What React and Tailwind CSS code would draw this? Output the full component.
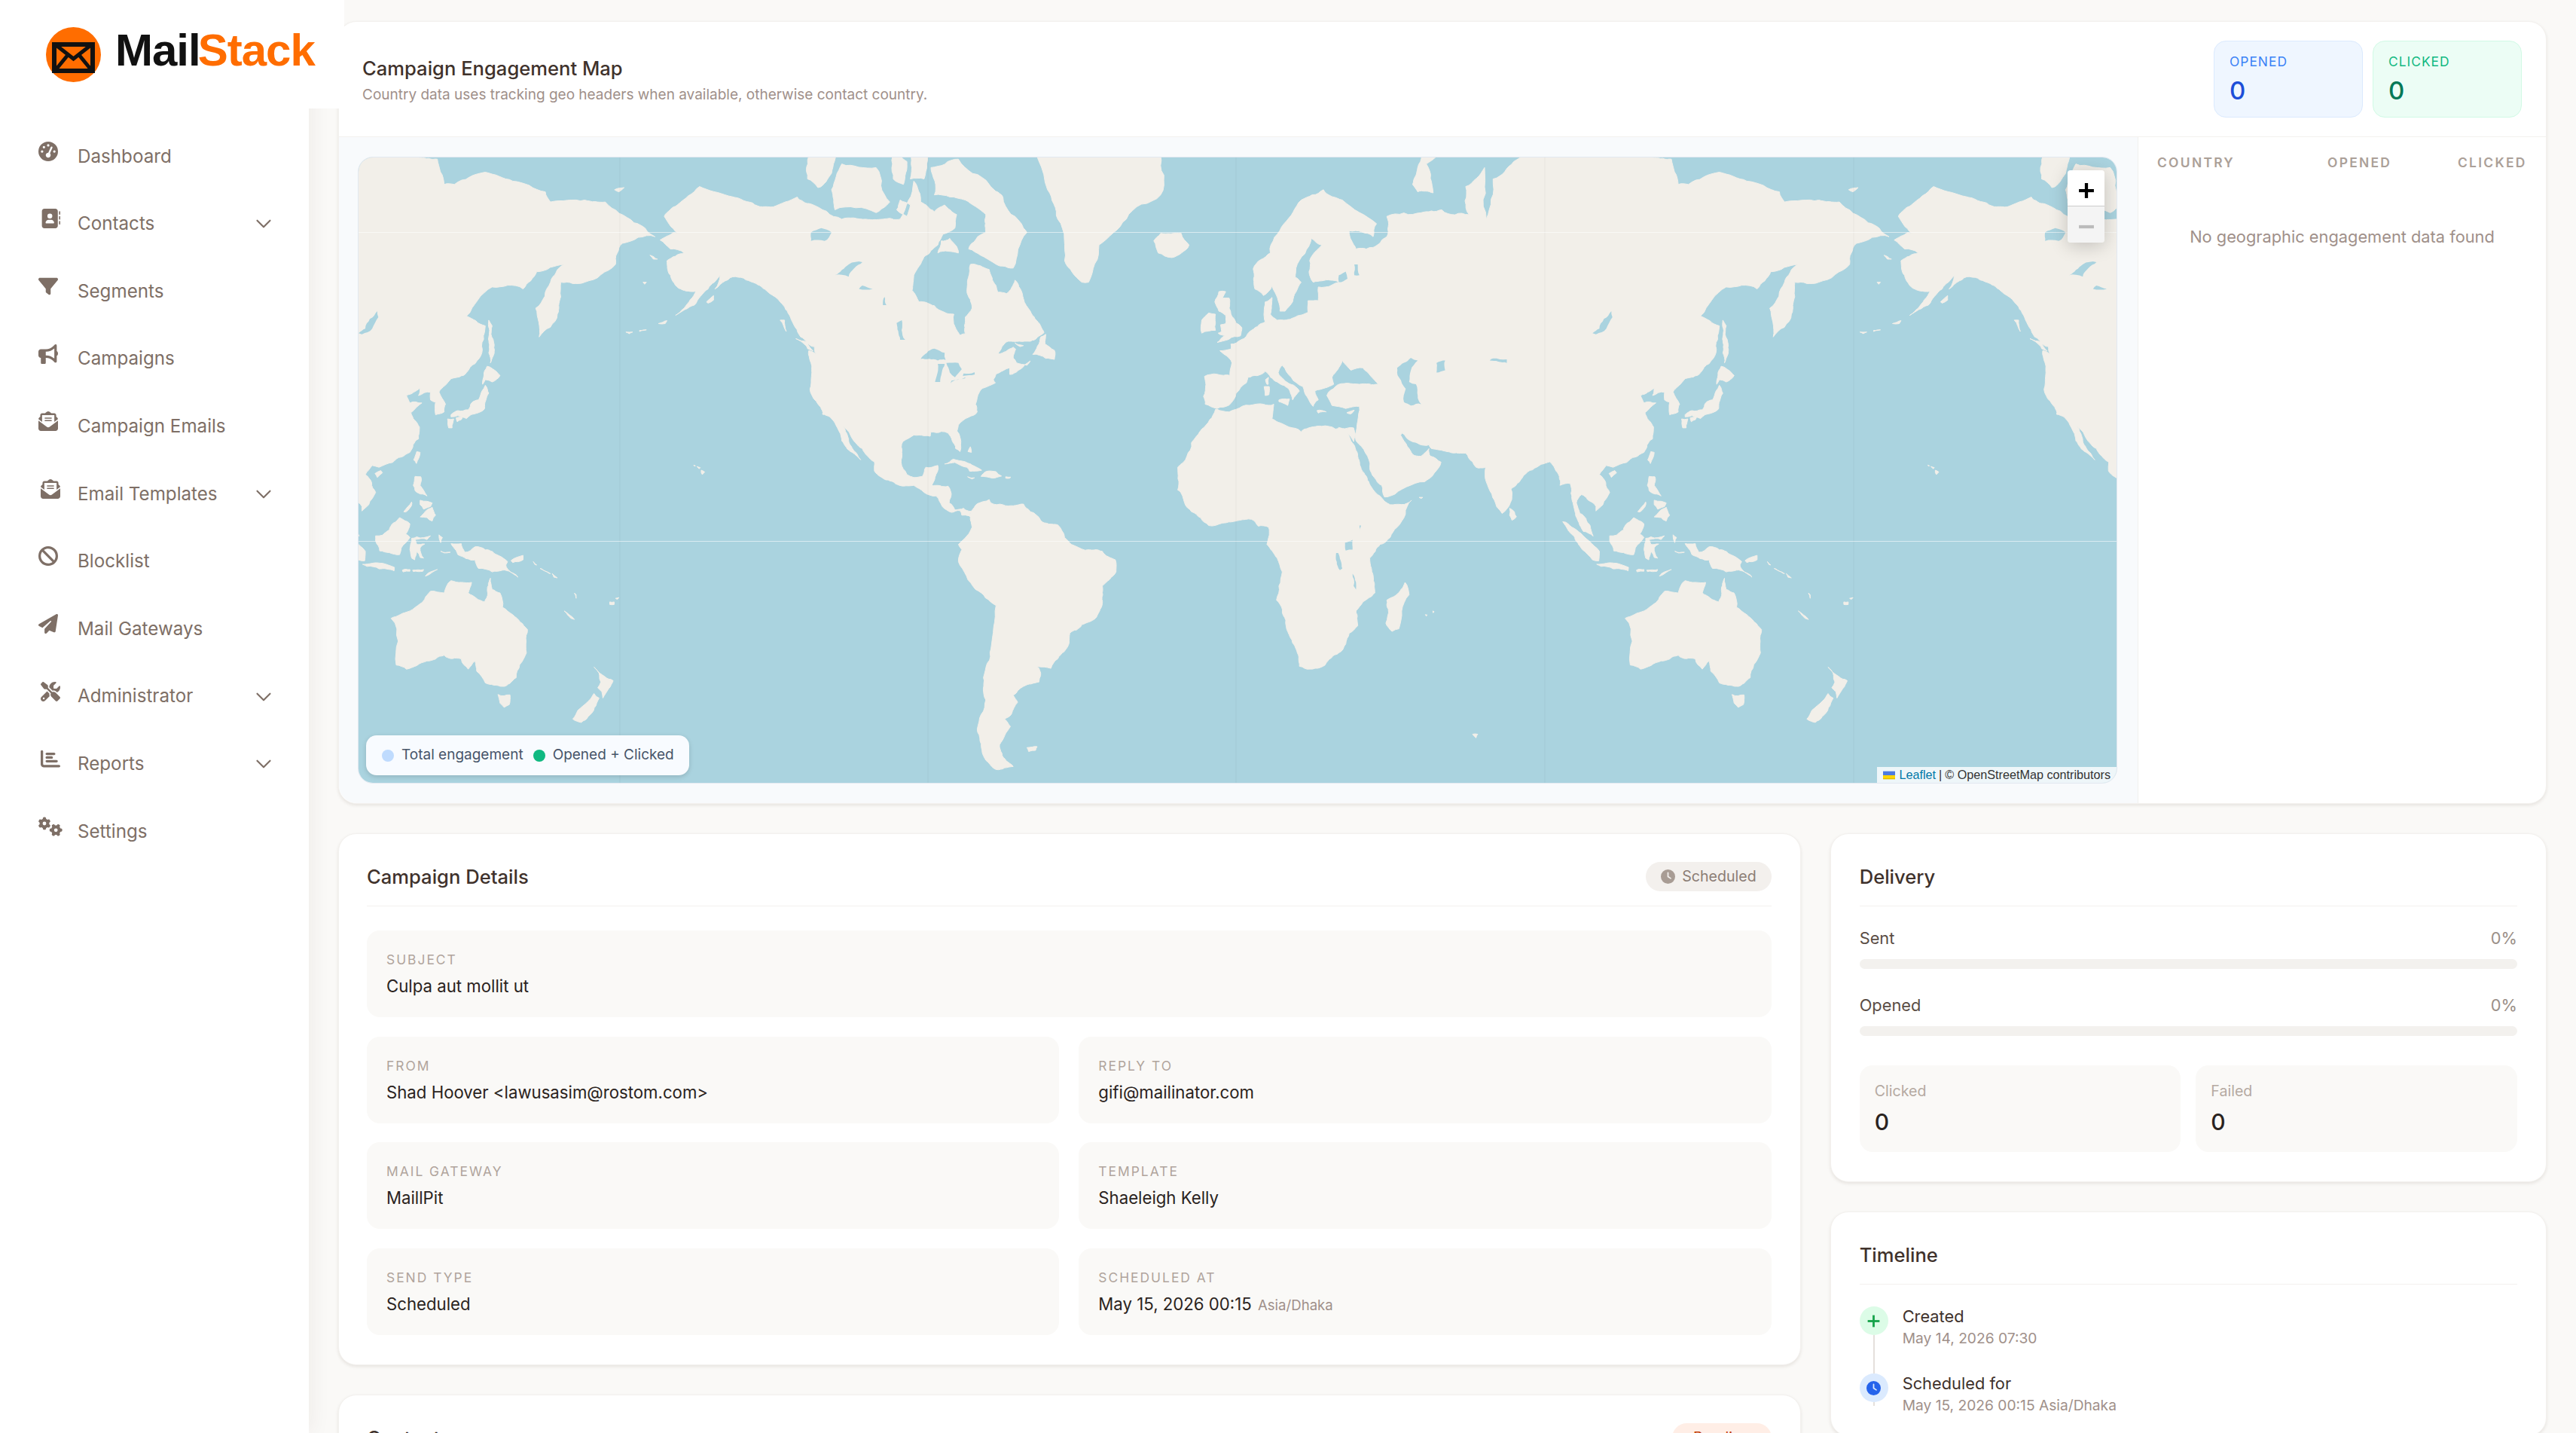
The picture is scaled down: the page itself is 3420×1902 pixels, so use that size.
import { ChevronDown, Plus, Minus } from 'lucide-react';
import {
    FaGaugeHigh, FaAddressBook, FaFilter, FaBullhorn, FaEnvelopeOpenText, FaBan,
    FaPaperPlane, FaScrewdriverWrench, FaChartBar, FaGears, FaClock,
} from 'react-icons/fa6';

const navItems = [
    { name: 'Dashboard', icon: FaGaugeHigh, iconClass: 'w-[26px] h-[26px]' },
    { name: 'Contacts', icon: FaAddressBook, iconClass: 'w-[26px] h-[26px] ml-[3px]', arrow: true },
    { name: 'Segments', icon: FaFilter, iconClass: 'w-[26px] h-[26px]' },
    { name: 'Campaigns', icon: FaBullhorn, iconClass: 'w-[26px] h-[26px]' },
    { name: 'Campaign Emails', icon: FaEnvelopeOpenText, iconClass: 'w-[26px] h-[26px]' },
    { name: 'Email Templates', icon: FaEnvelopeOpenText, iconClass: 'w-[26px] h-[26px] ml-[3px]', arrow: true },
    { name: 'Blocklist', icon: FaBan, iconClass: 'w-[26px] h-[26px]' },
    { name: 'Mail Gateways', icon: FaPaperPlane, iconClass: 'w-[26px] h-[26px]' },
    { name: 'Administrator', icon: FaScrewdriverWrench, iconClass: 'w-[26px] h-[26px] ml-[3px]', arrow: true },
    { name: 'Reports', icon: FaChartBar, iconClass: 'w-[26px] h-[26px] ml-[3px]', arrow: true },
    { name: 'Settings', icon: FaGears, iconClass: 'w-[32px] h-[26px]' },
];

// coastlines as lon,lat pairs, projected to web mercator below
const land = [
    // north america
    [-168, 65.6, -164, 66.5, -162, 66.3, -166.8, 68.3, -163, 69.5, -156.5, 71.3, -148, 70.4, -141, 69.7, -135, 69.3, -128, 70.3, -124, 69.6, -115, 68, -108, 68, -103, 68, -98, 68, -94, 71.8, -92, 69.8, -88, 68.8, -85, 69.5, -81.5, 68.5, -82, 67, -85.5, 66.3, -87, 65, -91, 63.5, -94, 61, -94.5, 58.8, -92.5, 57, -88, 56.4, -85, 55.3, -82.3, 55, -82, 52.9, -80.5, 51.3, -79, 51.6, -79, 54.5, -77, 56, -78.5, 58.7, -77.5, 62.5, -72, 61.8, -70, 59.5, -69.5, 58.5, -67, 58.3, -64.5, 60.3, -62, 57.5, -60, 55.5, -57, 53, -56, 51.8, -60, 50.2, -66.5, 50.2, -69.5, 47.8, -65, 49.1, -64.3, 48.7, -65, 47, -64, 46, -61, 45.5, -60, 46.4, -63.5, 44.5, -66, 43.6, -66, 45, -67, 44.8, -70, 43.7, -70.8, 42.5, -70.2, 41.8, -74, 40.6, -75.5, 38.5, -76, 37, -75.5, 35.2, -78, 33.9, -81, 32, -81.4, 30.5, -80.3, 27, -80.5, 25.2, -81.8, 26, -82.8, 28, -84, 30, -86, 30.4, -89, 30.3, -89.2, 29.2, -91, 29.3, -94, 29.5, -97.2, 27.8, -97.5, 25, -97.7, 22.3, -96, 19, -94, 18.2, -91.5, 18.5, -90.5, 21, -87, 21.5, -87.8, 18.3, -88.8, 15.9, -84, 15.8, -83.3, 14.5, -83.7, 11, -82, 9, -79.5, 9.5, -77.3, 8.6, -77.9, 7.3, -80, 7.5, -80.5, 8.8, -83, 8.3, -85.7, 10, -87.5, 13, -91, 14, -94, 16, -97, 15.8, -101.5, 17.5, -105.5, 20, -105.5, 22.5, -109, 26, -112.5, 29.5, -114.7, 31.7, -113, 28, -110.5, 24.5, -109.5, 23, -112, 25, -115, 28, -117, 32.5, -118.5, 34, -120.6, 34.6, -122.5, 37.7, -124.3, 40.4, -124, 46, -124.7, 48.4, -122.5, 47.8, -123, 49.2, -127, 51, -130, 54.5, -133, 57, -136, 58.3, -140, 59.8, -146, 60.8, -149, 60.2, -152, 59, -150.5, 61, -154, 59, -158, 56.5, -163.5, 54.8, -161, 56, -157.5, 58.7, -162, 59, -165, 61, -166, 63, -161, 64, -165, 64.5],
    // canadian islands
    [-61, 66.5, -65, 62, -71, 62.8, -78, 64.5, -73, 66.5, -73, 68.5, -79, 70, -88, 70.5, -89, 73, -81, 73.7, -72, 71.5, -68, 70.3, -62, 67],
    [-117, 69, -105, 68.7, -101, 69.8, -105, 73, -115, 73.3, -118, 71],
    [-125, 72, -122, 71.2, -118, 72.5, -116, 74.5, -124, 74.5],
    [-87, 64, -81, 64, -83.5, 65.8, -86, 65.5],
    [-100, 72, -97, 71.5, -96, 73.5, -100, 74.5],
    [-95, 72, -91, 72, -90, 74.5, -95, 74.5],
    [-99, 69, -96, 68.3, -95, 69.5, -98, 70],
    [-92, 74.6, -80, 74.6, -80, 75, -92, 75],
    [-59.3, 47.7, -57, 51, -55.5, 51.5, -55.7, 49.7, -53, 48.5, -53, 46.7, -55.5, 46.9],
    [-128.4, 50.7, -125, 50, -123.4, 48.4, -125, 48.8],
    [-133, 54, -131.7, 54, -131.2, 52, -132, 53],
    [-154.5, 57, -152.4, 58, -152.4, 57.3, -154, 56.8],
    [-64.5, 49.9, -62, 49.4, -63, 49.2],
    [-168.5, 53.4, -166, 53.9, -166.5, 53.4],
    [-174, 52.2, -172, 52.3, -174, 52],
    [-178, 51.9, -176, 51.9, -177, 51.6],
    [-171, 63.7, -168.8, 63.2, -170, 63.2],
    [-173, 60, -172, 60, -172.5, 59.7],
    // greenland, iceland
    [-45, 60, -43, 60, -40, 65, -32, 68, -22, 70.5, -22, 74, -18, 77, -58, 76, -55, 71, -52, 68, -50, 63],
    [-24, 65.5, -22, 66.4, -16, 66.4, -13.7, 65, -18.7, 63.4, -22.7, 64],
    // caribbean
    [-85, 21.9, -82.5, 23.2, -79, 22.5, -75, 20.7, -74.2, 20.2, -77.7, 19.9, -78.5, 21, -82, 22.3],
    [-74.4, 18.5, -72.8, 19.9, -70, 19.8, -68.4, 18.6, -71, 18, -72, 18.2],
    [-78.3, 18.4, -76.3, 18.1, -77, 17.8],
    [-67.2, 18.4, -65.7, 18.3, -66, 18, -67.2, 18],
    [-78.2, 25.2, -77.5, 26.5, -77.2, 25],
    // hawaii
    [-156, 20.2, -155, 19.7, -155.7, 19, -156, 19.5],
    [-157.3, 21.2, -156.3, 20.9, -156.6, 20.6],
    [-158.2, 21.6, -157.7, 21.4, -158, 21.3],
    // south america
    [-77.3, 8.6, -75.5, 10.8, -72, 12, -71.5, 11, -68, 10.5, -62, 10.7, -60, 8.5, -57, 6, -52, 4.7, -50, 1, -48, -1, -44, -2.7, -39, -3, -35.2, -5.5, -35, -9, -39, -13, -39, -18, -41, -22, -45, -23.7, -48.5, -26, -48.7, -28.5, -52, -32.5, -54, -34.8, -58, -34.3, -57, -36.5, -57.5, -38, -62, -39, -65, -41, -63.7, -42.5, -65.5, -45, -67.5, -46, -65.8, -47.5, -69, -51, -68.3, -52.5, -65, -54.8, -70, -55.3, -74, -52.5, -75.5, -48, -73, -42, -73.7, -37, -71.5, -30, -70, -18.5, -76, -14, -81, -6, -80, -2.5, -81, -1, -78.5, 1.5, -77, 4, -77.5, 7, -77.9, 7.3],
    [-61, -51.5, -58, -51.3, -58.5, -52, -60.5, -52.2],
    // eurasia
    [-9, 37, -9.5, 38.8, -8.8, 41.5, -9.2, 43.2, -1.8, 43.4, -1.2, 46, -4.7, 48.4, -1.5, 48.7, -1.5, 49.7, 1.5, 50.5, 4, 52, 8.5, 53.7, 8.5, 57, 10.5, 57.7, 10, 55, 12, 54, 14, 54, 18.5, 54.8, 21, 55.3, 21, 57.2, 24, 57.2, 24, 59.3, 28, 59.6, 30, 60, 25, 60.2, 22.5, 60, 21.3, 61.5, 21.5, 63, 25, 65, 22, 65.8, 17.5, 62, 17.3, 60.7, 19, 60, 16.5, 57, 14.3, 55.5, 12.8, 55.5, 11, 58.8, 10.5, 59.5, 8, 58, 5.5, 59, 5, 61.9, 10, 64, 14, 67.5, 19, 70, 25.5, 71, 31, 70, 41, 67.5, 40, 66, 33, 66.7, 35, 64.5, 38, 64.5, 40, 64.7, 44, 66, 44, 68.3, 54, 68.7, 60, 69, 68, 68.5, 67, 71.3, 72.5, 73, 73, 68, 75, 72, 81, 73.5, 87, 74.5, 100, 76.3, 113, 74, 122, 73.8, 127, 73.7, 129, 71.5, 132, 71.5, 141, 72.6, 149, 71.8, 158.5, 70.8, 160, 69.8, 170, 70, 176, 69.8, 184.4, 67.6, 190.5, 66, 181, 65.2, 179, 62.5, 170, 60, 163, 60, 163, 57.8, 162, 55, 156.7, 51, 155.7, 56, 160, 60, 164, 62.5, 156, 61.5, 152, 59, 143, 59.3, 135.5, 54.7, 141, 53, 140, 48, 135.5, 44, 131, 42.7, 127.5, 39.8, 129.4, 37, 129, 35.2, 126.5, 34.5, 126.5, 37.5, 125, 38, 125, 39.7, 121.5, 39, 122, 40.7, 118, 39, 119, 37.3, 122.5, 37.3, 119.3, 35, 121.8, 31.5, 121.5, 28.5, 119, 25, 114, 22.3, 110, 21, 108, 21.5, 106, 19, 109, 14, 107, 10.5, 105, 8.7, 105, 10, 102.5, 12, 100.8, 13.4, 99.3, 11, 100.3, 8, 103.3, 4.5, 104.2, 1.4, 101.3, 2.8, 99, 8, 98.3, 11, 97.5, 16.5, 94.5, 16, 94.3, 18.5, 91.5, 22.5, 89, 21.8, 86.5, 20.3, 82, 16.5, 80.2, 15, 80, 11, 77.6, 8, 76, 10, 73, 17, 72.8, 21, 70, 21, 69, 22.5, 67, 24.8, 61.5, 25.2, 57, 26, 56.3, 27, 51, 28, 48.5, 30, 48, 29.5, 50, 26.5, 51.5, 24.5, 54, 24, 56.3, 26, 56.7, 24, 59.8, 22.4, 55, 17, 45, 13, 43.3, 12.7, 42.5, 16, 39, 21, 35, 28, 34.8, 29.5, 35.5, 33, 36, 36.5, 32, 36, 28, 36.7, 26.5, 39, 29, 41, 36, 41.5, 41.5, 41.5, 37, 45, 33.5, 44.5, 31, 46.5, 28, 43, 28.5, 41.5, 26, 40.7, 23, 40, 24, 38, 22.5, 36.5, 19.5, 41, 13.5, 45.5, 12.3, 44, 16, 41.5, 18.5, 40, 16.5, 38, 15.7, 40, 12, 42, 8.5, 44.3, 3.5, 43, 3, 41.8, 0, 39.5, -2, 36.8, -5.5, 36],
    // europe islands
    [-5.5, 50, 1.3, 51.2, 1.7, 52.7, 0, 53.5, -1.5, 55, -2, 56, -2, 57.6, -4, 57.6, -3, 58.6, -5, 58.6, -6.2, 57, -5, 55.5, -3, 54.8, -3, 53.4, -4.5, 53.2, -4.2, 52, -5.2, 51.7, -3, 51.3],
    [-6, 52.2, -10, 51.7, -10, 54, -8, 55.2, -6, 55, -6, 53.5],
    [8.2, 41, 9.7, 41, 9.6, 39.2, 8.5, 39],
    [8.6, 42.5, 9.5, 43, 9.4, 41.5, 9, 41.5],
    [12.5, 38, 15.6, 38.2, 15.1, 36.7, 12.5, 37.6],
    [23.6, 35.5, 26.3, 35.2, 24, 34.9],
    [32.3, 35, 34.5, 35.6, 33.5, 34.7],
    [51.5, 71.5, 53, 70.8, 57.5, 70.7, 55.5, 73.3, 68, 76.5, 55, 75, 53, 73],
    [178.7, 71, 181.5, 71.2, 180, 70.8],
    // africa
    [-6, 35.8, -10, 31, -13, 27.5, -17, 21, -17, 14.7, -15, 11, -13, 8.5, -8, 4.5, -4, 5.2, 1, 6, 4.5, 6.3, 6.5, 4.3, 9.5, 4, 9.5, 1, 9, -1, 12, -5, 13.5, -9, 12.5, -13, 11.8, -17, 14.5, -22.5, 16.5, -28.5, 18.3, -32, 18.5, -34.3, 20, -34.8, 26, -34, 30, -31, 33, -26, 35.5, -24, 35, -20, 37, -17.5, 40.5, -15, 39.5, -8, 39, -5, 42, -1, 47, 4, 51.2, 11.8, 45, 10.5, 43.3, 11.5, 42, 13, 39.5, 15.5, 37.3, 19.5, 35.5, 24, 33.5, 28, 32.5, 30, 34.3, 27.8, 34.8, 29.5, 34.3, 31.3, 32.3, 31.2, 30, 31.4, 29, 31, 25, 31.7, 20, 31, 19, 30.3, 15.5, 31.5, 10.5, 33.5, 11, 37, 8, 37, 0, 35.8, -2, 35.2, -5.5, 35.8],
    [49.3, -12, 50.5, -15.5, 47.5, -24.8, 45.5, -25.5, 43.7, -23.3, 44.4, -19.5, 44, -17, 46.5, -15.7],
    [53.4, 12.6, 54.5, 12.6, 54, 12.3],
    [55.2, -21, 55.8, -21.1, 55.5, -21.4],
    [57.4, -20, 57.8, -20.2, 57.5, -20.5],
    [69, -49, 70.5, -49, 70, -49.7],
    // asia islands
    [79.8, 9.5, 81.2, 8.5, 81.8, 7, 80.5, 6, 79.8, 7.5],
    [142, 54, 143, 53, 143.5, 49, 142.5, 46, 142, 48, 142, 51],
    [140.2, 41.5, 141.5, 45.3, 145.3, 43.4, 143, 42, 141, 42.5],
    [141, 41.3, 142, 39.5, 140.8, 36, 139, 35, 136.8, 34.5, 135.5, 33.6, 133, 34.3, 131, 34, 131, 34.5, 133, 35.5, 136, 35.7, 137, 37.3, 139, 38, 140, 40],
    [130, 33.5, 131.8, 33.5, 131.3, 31.3, 130.3, 31.3],
    [132.5, 33.8, 134.5, 34.2, 134, 33.3, 132.8, 32.8],
    [121, 25.2, 122, 25, 120.9, 22, 120.1, 23],
    [108.8, 19.3, 110.5, 20.1, 111, 19.5, 109.5, 18.2],
    [120.5, 18.5, 122.2, 18.4, 122, 16, 124, 13, 121.5, 13.8, 120.5, 14.5, 120, 16],
    [122, 7, 123.5, 8.6, 125.5, 9.8, 126.5, 7.5, 125.5, 5.8, 124, 6.8],
    [122, 11.8, 124, 11.5, 125.5, 11, 125, 10, 123, 9.2, 122, 10.5],
    [117.2, 8.5, 119.5, 11.3, 119.6, 10.8, 117.8, 8.4],
    [95.3, 5.6, 98, 4, 103, 0, 106, -3, 105.8, -5.8, 104, -5.5, 101, -2.5, 98.5, 1.5],
    [105.2, -6.8, 108, -6.5, 111, -6.5, 114.5, -7.7, 114.4, -8.7, 110, -8.1, 106.5, -7.4],
    [109, 1.5, 111, 1.7, 113, 3.2, 116, 6.8, 119, 5, 117.8, 2, 119, 1, 116.5, -2, 116, -4, 113, -3.4, 110.2, -2.9, 109, 0],
    [119.5, 0.8, 121, 1.2, 125, 1.5, 124, 0.4, 120.5, 0.4, 121, -1, 123.3, -0.9, 122, -2, 123, -5, 122, -4.8, 121, -3, 120.4, -5.5, 119.5, -5, 119, -2.5],
    [131, -0.8, 134, -0.8, 135, -3.3, 138, -1.7, 141, -2.6, 145, -4.3, 147.5, -6, 147, -7, 150.5, -10.5, 146, -8.5, 143, -9, 139, -8, 138, -5.5, 133, -4, 132.5, -2.8],
    [119.8, -8.5, 123, -8.3, 122.8, -8.8, 120, -8.9],
    [123.5, -10.2, 127, -8.3, 125, -9.5],
    [116.8, -8.5, 119, -8.3, 119, -8.8, 117, -9],
    [127.5, 1.8, 128.5, 1, 128, -0.5, 127.6, 0.5],
    [128, -3, 130.8, -3.3, 129, -3.5],
    [148.5, -5.7, 152, -4.2, 152, -5.5, 149, -6.3],
    [155, -6, 156, -7, 155.5, -6.9],
    [157, -8, 160, -9.5, 159, -9],
    [160.5, -9.5, 162, -10.7, 161, -10.5],
    // oceania
    [113.5, -22, 115, -34, 118, -35, 124, -33, 129, -31.6, 134, -32.5, 136, -35, 138, -33, 138.5, -35.5, 141, -38.2, 146, -39, 150, -37, 153, -31, 153.3, -25, 149, -21, 146, -19, 145.3, -15, 143, -14, 142.5, -10.8, 141.7, -15, 140.8, -17.5, 136, -15, 137, -12, 131, -11.5, 129, -15, 125, -14.5, 122, -18, 119, -20],
    [144.7, -40.8, 148.2, -40.9, 148, -43, 146.5, -43.6, 145.3, -42.7],
    [172.7, -34.5, 174.5, -36, 175.8, -36.7, 178.3, -37.7, 177, -39.5, 175.3, -41.6, 175, -40.2, 173.8, -39.3, 174.7, -38, 174.3, -36.5],
    [172.7, -40.6, 174.2, -41.6, 172.8, -43.7, 171, -45.5, 169, -46.7, 166.5, -46, 168, -44.2, 171, -42.3],
    [164, -20, 167, -22.3, 166, -22],
    [177.3, -17.5, 178.6, -17.5, 178.6, -18.2, 177.3, -18.2],
    [179, -16.5, 180, -16.3, 179.5, -16.8],
    [167, -15, 167.5, -15.5, 167.5, -16.5],
];

// lakes and inland seas
const water = [
    [47, 45, 51, 47, 53, 46.5, 51, 44.5, 50.5, 42, 52.5, 41.5, 53, 39, 54, 37, 51, 36.7, 49, 37.5, 49.5, 40.5, 47.5, 43],
    [58.5, 46, 61, 46.5, 61, 44.5, 58.5, 44],
    [104, 51.7, 106, 52.5, 109.5, 55.5, 109.8, 54.5, 108, 52.5, 105, 51.5],
    [74, 46.5, 79, 46, 79, 46.7, 75, 46.9],
    [30, 60, 32.5, 60.5, 32, 61.5, 30, 61],
    [34.5, 61, 36, 61, 35.5, 62.5, 34.5, 62.5],
    [-92, 46.8, -88, 48.8, -85, 48, -84.7, 46.6, -87, 46.5],
    [-87.8, 42, -86.3, 42, -85, 45.8, -87, 45.8],
    [-84.5, 46, -81, 46, -80, 44.7, -82, 43, -83.5, 44],
    [-83.3, 41.7, -79, 42.8, -79, 43, -83, 42.3],
    [-79.7, 43.3, -76.2, 43.6, -76.3, 44.1, -79.5, 43.8],
    [-98, 50.5, -96.5, 50.5, -97.5, 54, -99, 53.5],
    [-117, 61, -113, 60.8, -109, 62.8, -113, 62.5],
    [-124, 65.5, -120, 65.5, -118, 66.5, -121, 67, -124, 66.5],
    [-110, 59, -106, 59, -109, 59.5],
    [-103, 56.5, -102, 56.5, -102.5, 57.8],
    [31.8, -0.5, 34, 0.3, 34, -2.5, 32, -2.8],
    [29.2, -3.5, 29.8, -3.5, 31, -8, 30.3, -8.5],
    [34, -9.5, 35, -12, 35, -14, 34.3, -13],
    [36, 4.5, 36.5, 4.5, 36, 2.5],
];

const WORLD = 1638.4;

// break long straight edges up a little so the coast doesn't look polygonal
const roughen = (pts) => {
    let out = pts;
    for (let pass = 0; pass < 3; pass++) {
        const next = [];
        out.forEach(([x, y], i) => {
            const [nx, ny] = out[(i + 1) % out.length];
            const len = Math.hypot(nx - x, ny - y);
            next.push([x, y]);
            if (len > 5) {
                const r = Math.sin(x * 12.9898 + y * 78.233) * 43758.5453;
                const off = (r - Math.floor(r) - 0.5) * 0.2;
                next.push([(x + nx) / 2 - (ny - y) * off, (y + ny) / 2 + (nx - x) * off]);
            }
        });
        out = next;
    }
    return out;
};

const toPath = (coords) => {
    const pts = [];
    for (let i = 0; i < coords.length; i += 2) {
        const lat = (coords[i + 1] * Math.PI) / 180;
        pts.push([
            1165 + (coords[i] * WORLD) / 360,
            509 - (WORLD / (2 * Math.PI)) * Math.log(Math.tan(Math.PI / 4 + lat / 2)),
        ]);
    }
    return 'M' + roughen(pts).map(([x, y]) => `${x.toFixed(1)} ${y.toFixed(1)}`).join('L') + 'Z';
};
const landPath = land.map(toPath).join('');
const waterPath = water.map(toPath).join('');

const WorldMap = () => (
    <svg viewBox="0 0 2334 830" className="block w-full h-full">
        <rect width="2334" height="830" fill="#aad3df" />
        {[-WORLD, 0, WORLD].map((dx) => (
            <g key={dx} transform={`translate(${dx} 0)`}>
                <path d={landPath} fill="#f2efe9" stroke="#f2efe9" strokeWidth="1" strokeLinejoin="round" />
                <path d={waterPath} fill="#aad3df" />
            </g>
        ))}
        {[347, 756, 1165, 1575, 1985].map((x) => (
            <line key={x} x1={x} y1="0" x2={x} y2="830" stroke="#000" strokeOpacity="0.04" />
        ))}
        {[99.5, 509.5].map((y) => (
            <line key={y} x1="0" y1={y} x2="2334" y2={y} stroke="#fff" strokeOpacity="0.55" />
        ))}
    </svg>
);

const Logo = () => (
    <svg viewBox="0 0 73 73" className="w-[73px] h-[73px] shrink-0">
        <circle cx="36.5" cy="36.5" r="36.5" fill="#ff6d00" />
        <rect x="11" y="23" width="51" height="35" fill="none" stroke="#111" strokeWidth="6" />
        <path d="M11 22 36.5 42 62 22M11 59 29 37M62 59 44 37" fill="none" stroke="#111" strokeWidth="5" />
    </svg>
);

const Sidebar = () => (
    <aside className="w-[410px] shrink-0 bg-white shadow-[4px_0_26px_rgba(60,40,20,0.06)]">
        <div className="relative z-10 flex items-center w-[457px] h-[144px] bg-white pl-[61px]">
            <Logo />
            <span className="ml-[19px] mb-[10px] [font-family:'Liberation_Sans',sans-serif] font-bold text-[60px] leading-none tracking-[-1px] text-[#111]">
                Mail<span className="-ml-[3px] text-[#ff6d00]">Stack</span>
            </span>
        </div>
        <nav className="pt-[19px]">
            {navItems.map((item) => {
                const Icon = item.icon;
                return (
                    <div key={item.name} className="flex items-center h-[89.6px] pl-[51px] pr-[43px] text-[#7e6f66]">
                        <div className="w-[52px] shrink-0 mb-[14px]">
                            <Icon className={item.iconClass} />
                        </div>
                        <span className="flex-1 text-[24.2px]">{item.name}</span>
                        {item.arrow && <ChevronDown size={34} strokeWidth={1.5} />}
                    </div>
                );
            })}
        </nav>
    </aside>
);

const Card = ({ className = '', children }) => (
    <div className={`bg-white border border-[#f3f1ee] rounded-[24px] shadow-[0_2px_4px_rgba(60,40,20,0.10)] ${className}`}>{children}</div>
);

const CardHeader = ({ title, children }) => (
    <div className="flex items-center justify-between h-[39px] pb-[19px] border-b border-[#f3f1ee] box-content">
        <h3 className="text-[25.6px] font-medium text-[#3f322c] leading-[39px]">{title}</h3>
        {children}
    </div>
);

const StatBox = ({ label, value, box, labelColor, valueColor }) => (
    <div className={`w-[198px] h-[102px] rounded-[16px] border pl-[20px] pt-[14px] ${box}`}>
        <div className={`text-[17.4px] leading-[26px] tracking-[1px] ${labelColor}`}>{label}</div>
        <div className={`text-[33px] leading-[40px] mt-[5px] font-medium ${valueColor}`}>{value}</div>
    </div>
);

const EngagementCard = () => (
    <Card>
        <div className="flex items-center justify-between h-[153px] pl-[31px] pr-[32px] border-b border-[#f3f1ee]">
            <div className="pt-[2px]">
                <h2 className="text-[25.6px] font-medium text-[#3f322c] leading-[36px]">Campaign Engagement Map</h2>
                <p className="text-[19px] text-[#a0908a] leading-[28px] mt-[3px]">Country data uses tracking geo headers when available, otherwise contact country.</p>
            </div>
            <div className="flex gap-[13px]">
                <StatBox label="OPENED" value="0" box="bg-[#eff6ff] border-[#dbeafe]" labelColor="text-[#3b82f6]" valueColor="text-[#1d4ed8]" />
                <StatBox label="CLICKED" value="0" box="bg-[#ecfdf5] border-[#d1fae5]" labelColor="text-[#10b981]" valueColor="text-[#047857]" />
            </div>
        </div>
        <div className="flex">
            <div className="w-[2389px] shrink-0 bg-[#f8fafc] border-r border-[#f1f0ee] pl-[25px] pr-[27px] py-[26px] rounded-bl-[24px]">
                <div className="relative h-[832px] rounded-[20px] overflow-hidden border border-[#e2e8f0]">
                    <WorldMap />
                    <div className="absolute top-[17px] right-[16px] w-[49px] rounded-[4px] shadow-[0_4px_24px_rgba(0,0,0,0.2)]">
                        <div className="flex items-center justify-center h-[48px] pt-[6px] bg-white rounded-t-[4px] border-b border-[#ccc]">
                            <Plus size={34} strokeWidth={3} strokeLinecap="butt" className="text-black" />
                        </div>
                        <div className="flex items-center justify-center h-[48px] pt-[6px] bg-[#f4f4f4] rounded-b-[4px]">
                            <Minus size={34} strokeWidth={3} strokeLinecap="butt" className="text-[#bbb]" />
                        </div>
                    </div>
                    <div className="absolute left-[10px] bottom-[10px] flex items-center h-[53px] pl-[21px] pr-[20px] rounded-[14px] bg-[#f8fbff] shadow-[0_2px_6px_rgba(0,0,0,0.15)] text-[19px] text-[#475569]">
                        <span className="w-[16px] h-[16px] rounded-full bg-[#bfdbfe]" />
                        <span className="ml-[10px]">Total engagement</span>
                        <span className="ml-[13px] w-[16px] h-[16px] rounded-full bg-[#10b981]" />
                        <span className="ml-[10px]">Opened + Clicked</span>
                    </div>
                    <div className="absolute right-0 bottom-0 flex items-center h-[21px] pl-[8px] pr-[8px] bg-white/80 [font-family:'Liberation_Sans',sans-serif] text-[16.2px] text-[#333]">
                        <svg viewBox="0 0 12 8" className="w-[16px] h-[12px] mr-[5px]">
                            <path fill="#4c7be1" d="M0 0h12v4H0z" />
                            <path fill="#ffd500" d="M0 4h12v3H0z" />
                            <path fill="#e0bc00" d="M0 7h12v1H0z" />
                        </svg>
                        <span className="text-[#0078a8]">Leaflet</span>
                        <span className="mx-[4px]">|</span>
                        <span>© OpenStreetMap contributors</span>
                    </div>
                </div>
            </div>
            <div className="flex-1 pl-[25px]">
                <div className="flex pt-[22px] text-[17.4px] leading-[24px] font-semibold tracking-[2.3px] text-[#aba098]">
                    <span className="w-[226px]">COUNTRY</span>
                    <span className="w-[173px]">OPENED</span>
                    <span>CLICKED</span>
                </div>
                <p className="-ml-[25px] mt-[71px] text-center text-[21.8px] leading-[30px] text-[#a0908a]">No geographic engagement data found</p>
            </div>
        </div>
    </Card>
);

const Field = ({ label, children, className = '' }) => (
    <div className={`h-[115px] rounded-[17px] bg-[#faf9f7] px-[26px] pt-[26px] ${className}`}>
        <div className="text-[17.4px] leading-[26px] tracking-[2px] text-[#b0a49c]">{label}</div>
        <div className="mt-[9px] text-[22.2px] leading-[26px] text-[#2a2320]">{children}</div>
    </div>
);

const DetailsCard = () => (
    <Card className="pl-[37px] pr-[38px] pt-[37px] pb-[39px]">
        <CardHeader title="Campaign Details">
            <span className="flex items-center gap-[9px] h-[39px] px-[20px] rounded-full bg-[#f3f0ed] text-[19.6px] text-[#8b7d75]">
                <FaClock className="w-[19px] h-[19px] text-[#a89c94]" />
                Scheduled
            </span>
        </CardHeader>
        <div className="grid grid-cols-2 gap-x-[26px] gap-y-[25.6px] mt-[32px]">
            <Field label="SUBJECT" className="col-span-2">Culpa aut mollit ut</Field>
            <Field label="FROM">Shad Hoover &lt;lawusasim@rostom.com&gt;</Field>
            <Field label="REPLY TO">gifi@mailinator.com</Field>
            <Field label="MAIL GATEWAY">MaillPit</Field>
            <Field label="TEMPLATE">Shaeleigh Kelly</Field>
            <Field label="SEND TYPE">Scheduled</Field>
            <Field label="SCHEDULED AT">
                May 15, 2026 00:15 <span className="ml-[2px] text-[18.6px] text-[#a0908a]">Asia/Dhaka</span>
            </Field>
        </div>
    </Card>
);

const ContentCard = () => (
    <Card className="pl-[37px] pr-[38px] pt-[37px] pb-[39px]">
        <CardHeader title="Content">
            <span className="flex items-center h-[39px] px-[28px] rounded-full bg-[#ffeee6] text-[19.6px] text-[#c2410c]">Pending</span>
        </CardHeader>
    </Card>
);

const ProgressRow = ({ label, className = '' }) => (
    <div className={className}>
        <div className="flex justify-between text-[21.8px] leading-[30px]">
            <span className="text-[#5a4d45]">{label}</span>
            <span className="text-[#9a8f88]">0%</span>
        </div>
        <div className="h-[13px] mt-[13px] rounded-full bg-[#f3f1ee]" />
    </div>
);

const MiniStat = ({ label }) => (
    <div className="h-[115px] rounded-[17px] bg-[#faf9f7] pl-[20px] pt-[21px]">
        <div className="text-[19.6px] leading-[26px] text-[#b5aaa2]">{label}</div>
        <div className="mt-[10px] text-[30px] leading-[36px] font-medium text-[#2a2320]">0</div>
    </div>
);

const DeliveryCard = () => (
    <Card className="px-[38px] pt-[37px] pb-[39px]">
        <CardHeader title="Delivery" />
        <ProgressRow label="Sent" className="mt-[27px]" />
        <ProgressRow label="Opened" className="mt-[33px]" />
        <div className="grid grid-cols-2 gap-[20px] mt-[39px]">
            <MiniStat label="Clicked" />
            <MiniStat label="Failed" />
        </div>
    </Card>
);

const TimelineItem = ({ title, date, dot, line, children }) => (
    <div className={`flex gap-[19px] ${line}`}>
        <div className="flex flex-col items-center w-[38px] shrink-0">
            <div className={`flex items-center justify-center w-[38px] h-[38px] shrink-0 rounded-full ${dot}`}>{children}</div>
            <div className="flex-1 w-[2px] bg-[#e5e0dc]" />
        </div>
        <div>
            <div className="text-[21.8px] leading-[26px] text-[#3f322c]">{title}</div>
            <div className="mt-[3px] text-[19.2px] leading-[26px] text-[#a0908a]">{date}</div>
        </div>
    </div>
);

const TimelineCard = () => (
    <Card className="px-[38px] pt-[37px] pb-[39px]">
        <CardHeader title="Timeline" />
        <div className="mt-[29px]">
            <TimelineItem title="Created" date="May 14, 2026 07:30" dot="bg-[#dcfce7]" line="h-[89px]">
                <Plus size={27} strokeWidth={2.5} strokeLinecap="butt" className="text-[#16a34a]" />
            </TimelineItem>
            <TimelineItem title="Scheduled for" date="May 15, 2026 00:15 Asia/Dhaka" dot="bg-[#dbeafe]" line="h-[43px]">
                <FaClock className="w-[19px] h-[19px] text-[#2563eb]" />
            </TimelineItem>
        </div>
    </Card>
);

const App = () => (
    <div className="flex h-[1902px] overflow-hidden bg-[#faf9f7] [font-family:Inter,sans-serif]">
        <Sidebar />
        <main className="flex-1 min-w-0 pl-[39px] pr-[39px] pt-[28px]">
            <EngagementCard />
            <div className="grid grid-cols-3 gap-[39px] mt-[39px]">
                <div className="col-span-2 flex flex-col gap-[39px]">
                    <DetailsCard />
                    <ContentCard />
                </div>
                <div className="flex flex-col gap-[39px]">
                    <DeliveryCard />
                    <TimelineCard />
                </div>
            </div>
        </main>
    </div>
);

export default App;
